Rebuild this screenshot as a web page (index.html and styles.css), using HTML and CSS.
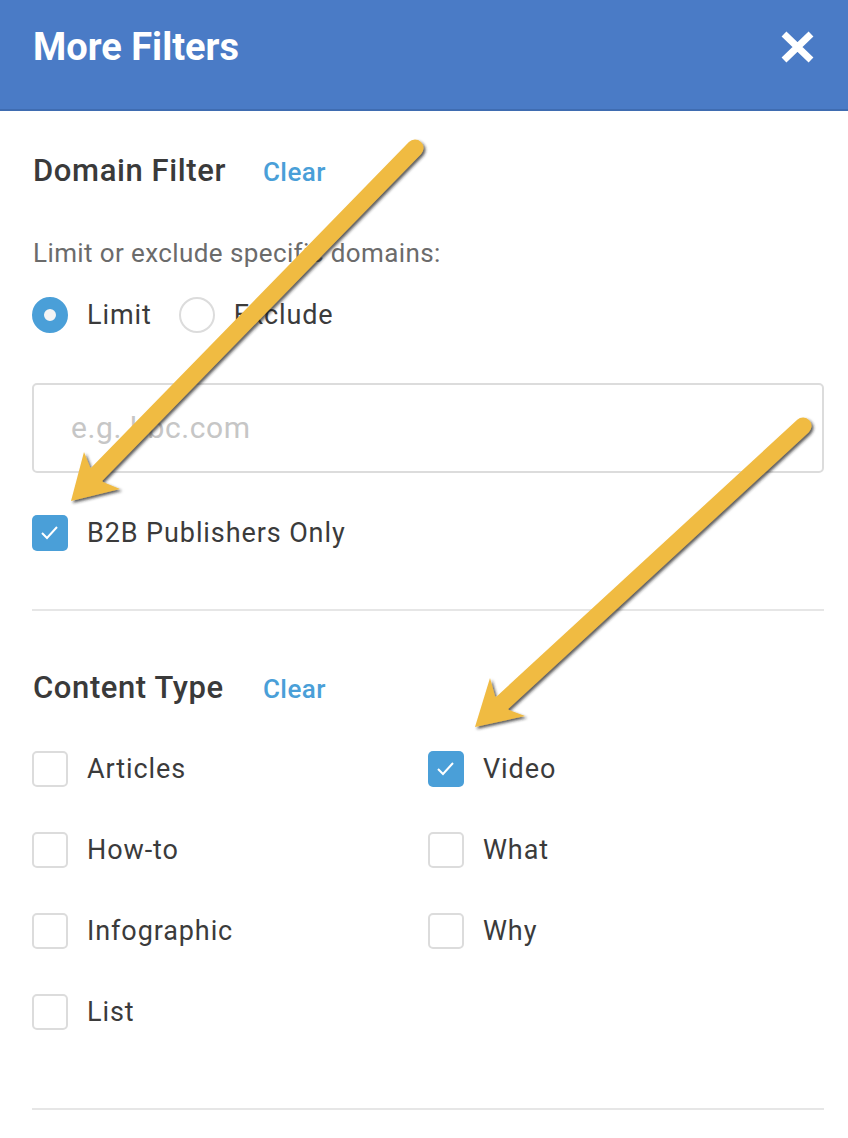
FILE: index.html
```html
<!DOCTYPE html>
<html lang="en">
<head>
    <meta charset="UTF-8">
    <title>More Filters</title>
    <link rel="stylesheet" href="styles.css">
</head>
<body>
<div class="filters">
    <div class="filters_head">
        <div class="filters_title">More Filters</div>
        <svg class="filters_close" width="33" height="32" viewBox="0 0 33 32">
            <path d="M3 3 L30 29 M30 3 L3 29" stroke="#fff" stroke-width="7" fill="none"/>
        </svg>
    </div>

    <div class="filter_section">
        <div class="filter_heading">
            <span class="filter_name">Domain Filter</span>
            <span class="filter_clear">Clear</span>
        </div>
        <div class="filter_hint">Limit or exclude specific domains:</div>
        <div class="radio_row">
            <label class="radio_item"><span class="radio radio_on"></span>Limit</label>
            <label class="radio_item"><span class="radio"></span>Exclude</label>
        </div>
        <div class="domain_input">e.g. bbc.com</div>
        <label class="check_item check_b2b">
            <span class="check check_on">
                <svg width="36" height="36" viewBox="0 0 36 36"><polyline points="10,18 15,23 25,12" fill="none" stroke="#fff" stroke-width="2"/></svg>
            </span>B2B Publishers Only
        </label>
    </div>

    <div class="filter_section filter_section2">
        <div class="filter_heading">
            <span class="filter_name">Content Type</span>
            <span class="filter_clear">Clear</span>
        </div>
        <div class="check_grid">
            <label class="check_item"><span class="check"></span>Articles</label>
            <label class="check_item"><span class="check check_on">
                <svg width="36" height="36" viewBox="0 0 36 36"><polyline points="10,18 15,23 25,12" fill="none" stroke="#fff" stroke-width="2"/></svg>
            </span>Video</label>
            <label class="check_item"><span class="check"></span>How-to</label>
            <label class="check_item"><span class="check"></span>What</label>
            <label class="check_item"><span class="check"></span>Infographic</label>
            <label class="check_item"><span class="check"></span>Why</label>
            <label class="check_item"><span class="check"></span>List</label>
        </div>
    </div>
</div>

<!-- annotation arrows drawn over the panel -->
<svg class="arrows" width="848" height="1138" viewBox="0 0 848 1138">
    <defs>
        <filter id="shadow" x="-10%" y="-10%" width="130%" height="130%">
            <feDropShadow dx="2" dy="2" stdDeviation="1.4" flood-color="#222" flood-opacity="0.75"/>
        </filter>
    </defs>
    <g filter="url(#shadow)" fill="#f0bb43" stroke="none">
        <line x1="415" y1="148" x2="95" y2="476" stroke="#f0bb43" stroke-width="17" stroke-linecap="round"/>
        <polygon points="71,501 84,452 90,467 103,482 120,489"/>
        <line x1="803" y1="426" x2="501" y2="704" stroke="#f0bb43" stroke-width="17" stroke-linecap="round"/>
        <polygon points="475,727 490,678 495,696 509,710 525,716"/>
    </g>
</svg>
</body>
</html>
```

FILE: styles.css
```css
body {
    margin: 0;
    position: relative;
    background: #fff;
    font-family: Roboto, "Liberation Sans", sans-serif;
    color: #3b3b3b;
}

.filters_head {
    height: 109px;
    background: #4a7bc6;
    border-bottom: 2px solid #3f6cb1;
    display: flex;
    justify-content: space-between;
    align-items: flex-start;
    padding: 0 34px 0 33px;
}

.filters_title {
    margin-top: 25px;
    font-size: 38px;
    line-height: 44px;
    font-weight: 700;
    color: #fff;
}

.filters_close {
    margin-top: 31px;
}

.filter_section {
    margin: 0 24px 0 32px;
    padding-top: 40px;
    padding-bottom: 58px;
    border-bottom: 2px solid #e6e6e6;
}

.filter_section2 {
    padding-top: 57px;
    padding-bottom: 78px;
}

.filter_heading {
    display: flex;
    align-items: baseline;
    height: 40px;
}

.filter_name {
    font-size: 31px;
    line-height: 40px;
    font-weight: 500;
    letter-spacing: 0.6px;
    color: #3a3a3a;
    width: 230px;
    padding-left: 1px;
}

.filter_clear {
    font-size: 26px;
    font-weight: 500;
    letter-spacing: 0.4px;
    color: #4a9fd8;
}

.filter_hint {
    margin-top: 45px;
    font-size: 26px;
    line-height: 34px;
    letter-spacing: 0.4px;
    color: #6b6b6b;
    padding-left: 1px;
}

.radio_row {
    margin-top: 27px;
    display: flex;
    gap: 27px;
}

.radio_item, .check_item {
    display: flex;
    align-items: center;
    height: 36px;
    font-size: 27px;
    line-height: 36px;
    letter-spacing: 0.9px;
    color: #3b3b3b;
}

.radio {
    width: 36px;
    height: 36px;
    box-sizing: border-box;
    border-radius: 50%;
    border: 2px solid #dcdcdc;
    margin-right: 19px;
}

.radio_on {
    border: 12px solid #4a9fd8;
    background: #f4f4f4;
}

.domain_input {
    margin-top: 50px;
    height: 90px;
    box-sizing: border-box;
    border: 2px solid #dcdcdc;
    border-radius: 5px;
    padding-left: 37px;
    font-size: 30px;
    line-height: 86px;
    letter-spacing: 0.6px;
    color: #c6c6c6;
}

.check_b2b {
    margin-top: 42px;
}

.check {
    width: 36px;
    height: 36px;
    box-sizing: border-box;
    border: 2px solid #dcdcdc;
    border-radius: 5px;
    margin-right: 19px;
    flex-shrink: 0;
}

.check_on {
    border: none;
    background: #4a9fd8;
}

.check svg {
    display: block;
}

.check_grid {
    margin-top: 43px;
    display: grid;
    grid-template-columns: 396px 1fr;
    row-gap: 45px;
}

.arrows {
    position: absolute;
    top: 0;
    left: 0;
    pointer-events: none;
}
```
